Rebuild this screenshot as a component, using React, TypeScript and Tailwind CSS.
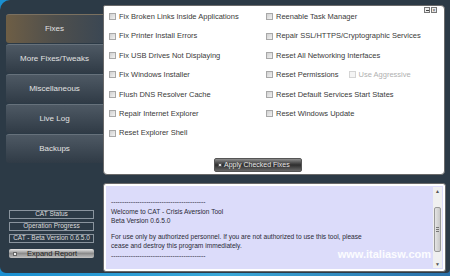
import React from "react"

const leftFixes = [
  "Fix Broken Links Inside Applications",
  "Fix Printer Install Errors",
  "Fix USB Drives Not Displaying",
  "Fix Windows Installer",
  "Flush DNS Resolver Cache",
  "Repair Internet Explorer",
  "Reset Explorer Shell",
]

const rightFixes = [
  "Reenable Task Manager",
  "Repair SSL/HTTPS/Cryptographic Services",
  "Reset All Networking Interfaces",
  "Reset Permissions",
  "Reset Default Services Start States",
  "Reset Windows Update",
]

const navItems = ["Fixes", "More Fixes/Tweaks", "Miscellaneous", "Live Log", "Backups"]

function Box({ disabled = false }: { disabled?: boolean }) {
  return (
    <span
      className={
        disabled
          ? "w-[7px] h-[7px] shrink-0 border border-[#d4d4d4] bg-[#f4f4f4]"
          : "w-[7px] h-[7px] shrink-0 border border-[#a8a8a8] bg-gradient-to-br from-[#d0d0d0] to-[#f2f2f2]"
      }
    />
  )
}

function FixRow({ label, children }: { label: string; children?: React.ReactNode }) {
  return (
    <div className="h-[19.4px] flex items-center gap-[3px]">
      <Box />
      <span className="text-[7.5px] text-[#3a3a3a] whitespace-nowrap">{label}</span>
      {children}
    </div>
  )
}

export default function App() {
  return (
    <div
      className="w-[450px] h-[276px] overflow-hidden bg-gradient-to-r from-[#1a8fd0] via-[#3aa8d8] to-[#2a6fa8]"
      style={{ fontFamily: '"Liberation Sans", Arial, sans-serif' }}
    >
      <div className="w-[450px] h-[273px] bg-[#2c3a46] rounded-tl-[10px] rounded-bl-[6px] rounded-br-[4px] flex">
        {/* Left nav */}
        <div className="w-[103px] shrink-0 flex flex-col pl-[6px] pt-[14px]">
          <div className="flex flex-col gap-[1px]">
            {navItems.map((item, i) => (
              <div
                key={item}
                className={
                  i === 0
                    ? "h-[29px] rounded-l-[3px] flex items-center justify-center text-[8px] text-[#e2e2e2] bg-gradient-to-r from-[#6e5e45] via-[#4f4f4c] to-[#3b4753] border-t border-[#7a7060]"
                    : "h-[29px] rounded-l-[3px] flex items-center justify-center text-[8px] text-[#e2e2e2] bg-gradient-to-b from-[#4e5964] to-[#303b46] border-t border-[#66717b]"
                }
              >
                {item}
              </div>
            ))}
          </div>

          <div className="flex flex-col mt-[47px] pr-[9px] pl-[3px] gap-[3px]">
            <div className="h-[9px] border border-[#8a949e] flex items-center justify-center text-[6.5px] text-[#dcdcdc] leading-none">
              CAT Status
            </div>
            <div className="h-[9px] border border-[#8a949e] flex items-center justify-center text-[6.5px] text-[#dcdcdc] leading-none">
              Operation Progress
            </div>
            <div className="h-[9px] border border-[#8a949e] flex items-center justify-center text-[6.5px] text-[#dcdcdc] leading-none">
              CAT - Beta Version 0.6.5.0
            </div>
            <div className="h-[9px] mt-[3px] rounded-[2px] flex items-center gap-[10px] pl-[4px] text-[7.5px] text-[#1e1e1e] leading-none bg-gradient-to-b from-[#e8e8e8] via-[#8c8c8c] to-[#c4c4c4]">
              <span className="w-[4px] h-[4px] bg-[#eee] border border-[#666]" />
              Expand Report
            </div>
          </div>
        </div>

        {/* Right side */}
        <div className="flex-1 flex flex-col pt-[5px] pr-[5px]">
          <div className="h-[170px] bg-white border border-[#6a6a6a] rounded-[4px] rounded-tl-[2px] flex flex-col">
            <div className="flex-1 flex relative">
              <div className="w-[157px] pl-[5px] pt-[1px]">
                {leftFixes.map((f) => (
                  <FixRow key={f} label={f} />
                ))}
              </div>
              <div className="flex-1 pl-[5px] pt-[1px]">
                {rightFixes.map((f) =>
                  f === "Reset Permissions" ? (
                    <FixRow key={f} label={f}>
                      <span className="ml-[7px] flex items-center gap-[3px]">
                        <Box disabled />
                        <span className="text-[7.5px] text-[#b0b0b0] whitespace-nowrap">Use Aggressive</span>
                      </span>
                    </FixRow>
                  ) : (
                    <FixRow key={f} label={f} />
                  )
                )}
              </div>
              <div className="absolute right-[7px] top-[1px] flex gap-[1px]">
                <span className="w-[6px] h-[6px] border border-[#777] bg-[#eee] flex items-center justify-center">
                  <span className="w-[3px] h-[1px] bg-[#444]" />
                </span>
                <span className="w-[6px] h-[6px] border border-[#777] bg-[#eee] flex items-center justify-center text-[5px] leading-none text-[#444]">
                  ×
                </span>
              </div>
            </div>
            <div className="flex justify-center pb-[2px] pr-[32px]">
              <div className="w-[88px] h-[14px] rounded-[2px] flex items-center gap-[2px] pl-[3px] text-[7px] text-[#e8e8e8] bg-gradient-to-b from-[#8e8e8e] via-[#2e2e2e] to-[#6a6a6a] border border-[#555]">
                <span className="w-[4px] h-[4px] bg-[#ddd] border border-[#555]" />
                Apply Checked Fixes
              </div>
            </div>
          </div>

          <div className="mt-[8px] h-[89px] mr-[-1px] border border-[#6a6a6a] rounded-[3px] bg-white p-[2px]">
            <div className="h-full bg-[#dcdcfa] flex">
              <div className="flex-1 pl-[5px] pt-[11px] text-[6.6px] leading-[9.5px] text-[#2a2a36] whitespace-nowrap overflow-hidden">
                <div>-------------------------------------------</div>
                <div>Welcome to CAT - Crisis Aversion Tool</div>
                <div>Beta Version 0.6.5.0</div>
                <div className="h-[6px]" />
                <div>For use only by authorized personnel. If you are not authorized to use this tool, please</div>
                <div>cease and destroy this program immediately.</div>
                <div>-------------------------------------------</div>
                <div className="flex justify-end pr-[2px] -mt-[12px] text-[11px] leading-[12px] font-bold text-white/90">
                  www.italiasw.com
                </div>
              </div>
              <div className="w-[9px] shrink-0 bg-[#f0f0f0] flex flex-col items-center mr-[1px] my-[1px]">
                <span className="text-[5px] leading-[8px] text-[#555]">▲</span>
                <div className="mt-[12px] w-[7px] h-[45px] rounded-[2px] border border-[#999] bg-gradient-to-r from-[#e4e4e4] to-[#c8c8c8] flex flex-col items-center justify-center gap-[1px]">
                  <span className="w-[3px] h-[1px] bg-[#777]" />
                  <span className="w-[3px] h-[1px] bg-[#777]" />
                  <span className="w-[3px] h-[1px] bg-[#777]" />
                </div>
                <span className="mt-auto text-[5px] leading-[8px] text-[#555]">▼</span>
              </div>
            </div>
          </div>
        </div>
      </div>
    </div>
  )
}
